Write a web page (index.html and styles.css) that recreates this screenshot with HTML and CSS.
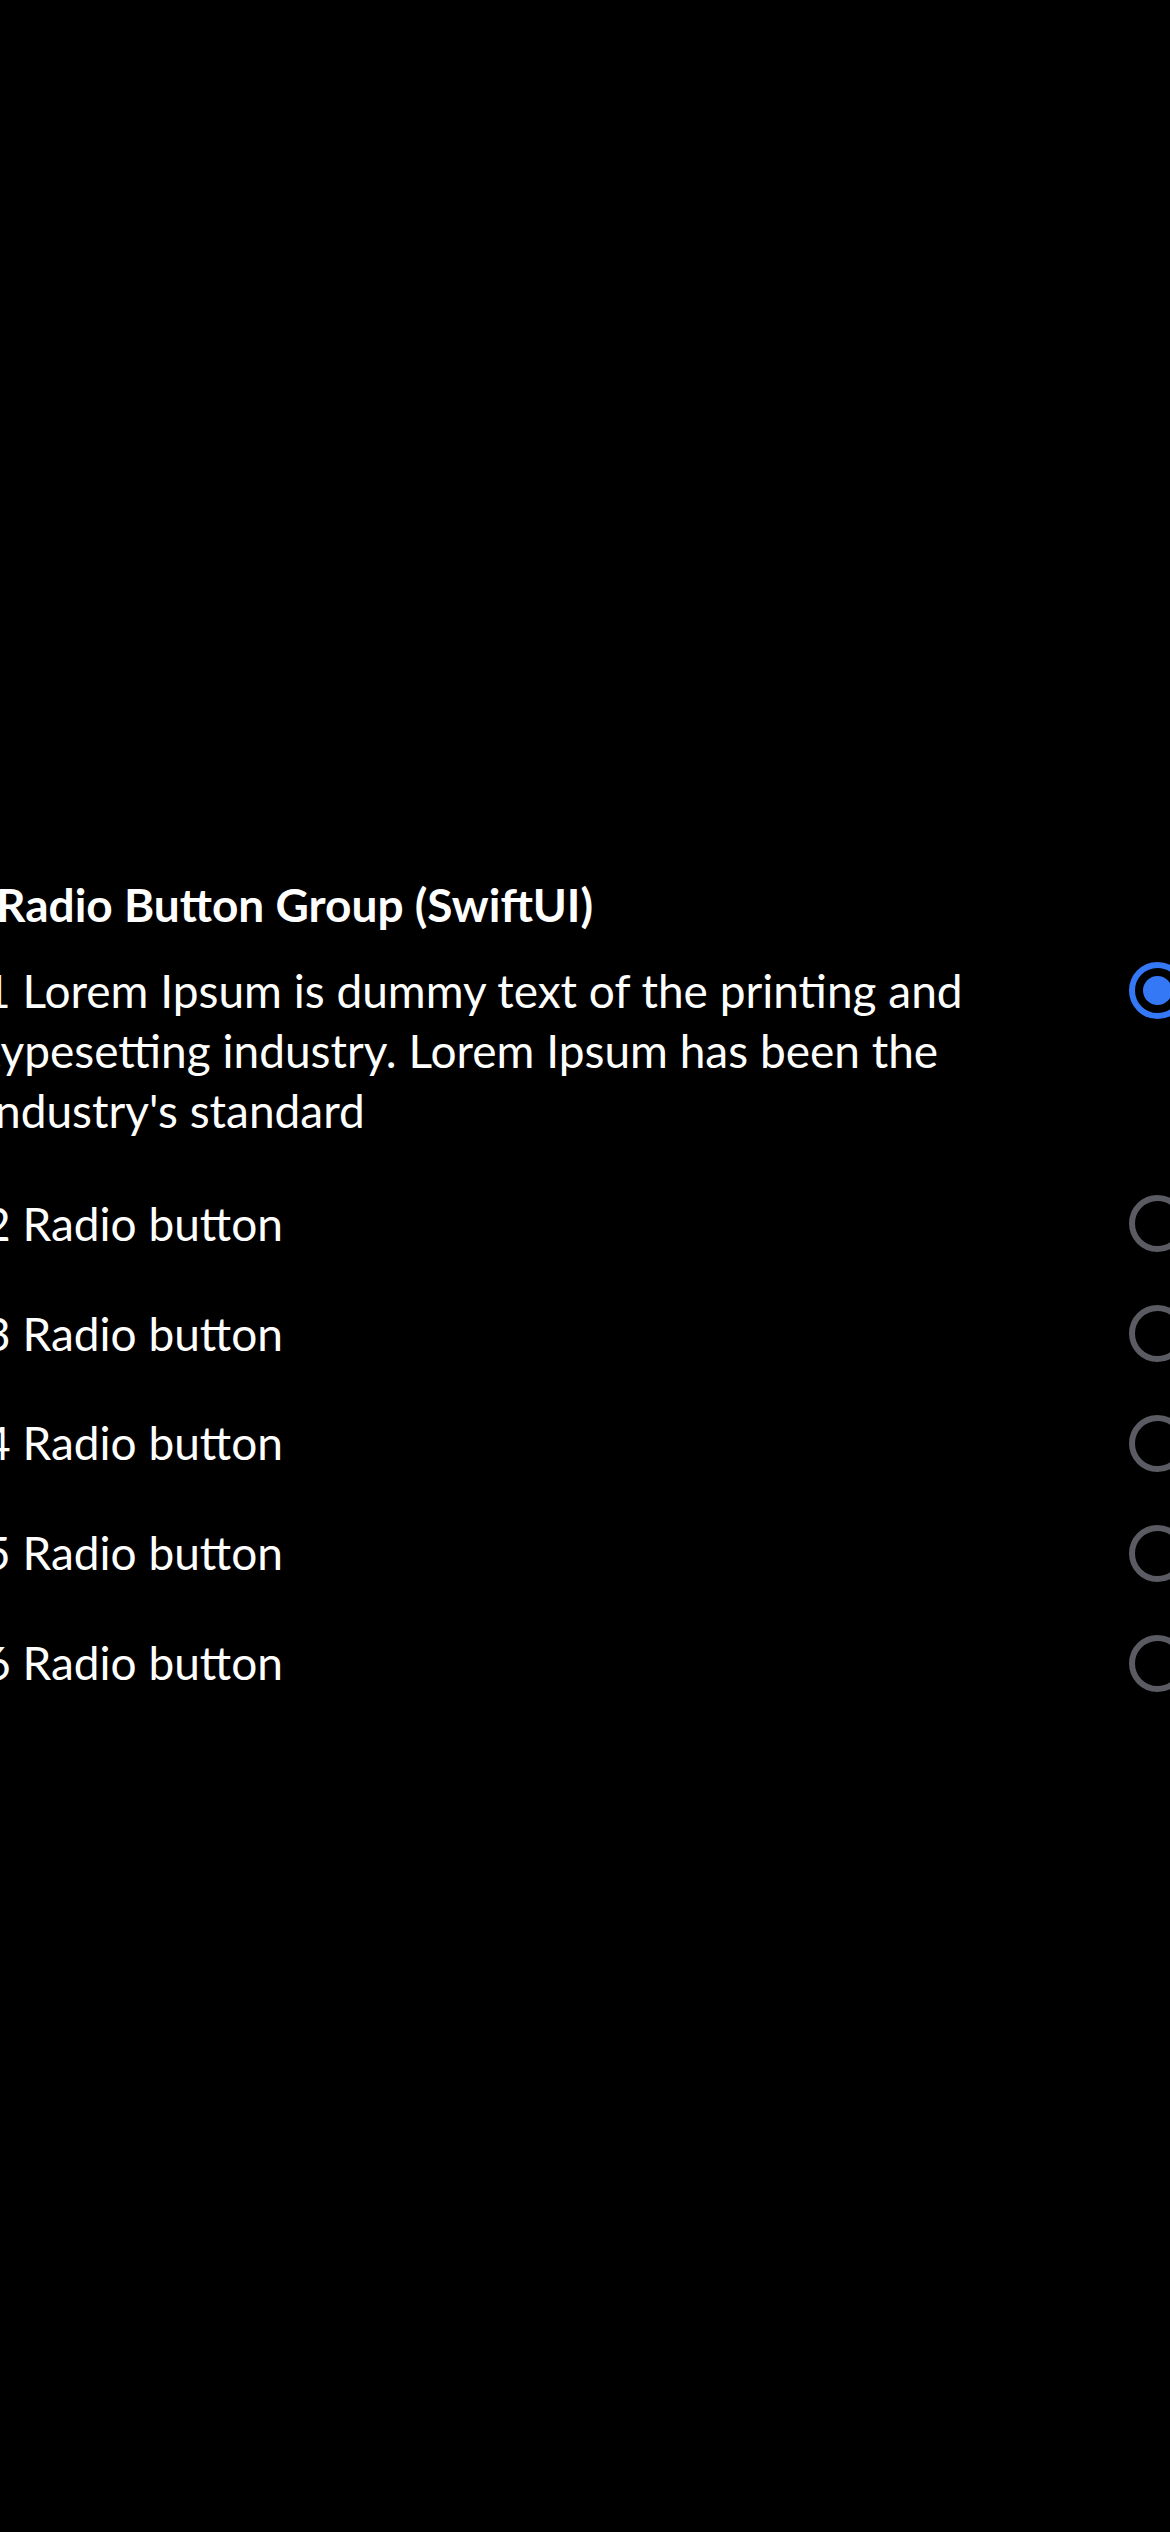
FILE: index.html
```html
<!DOCTYPE html>
<html lang="en">
<head>
<meta charset="utf-8">
<title>Radio Button Group (SwiftUI)</title>
<link rel="stylesheet" href="styles.css">
</head>
<body>
<main class="screen">
  <section class="group">
    <h1 class="title">Radio Button Group (SwiftUI)</h1>
    <ul class="options">
      <li class="option option-first">
        <span class="label">1 Lorem Ipsum is dummy text of the printing and typesetting industry. Lorem Ipsum has been the industry's standard</span>
        <span class="radio radio-on"></span>
      </li>
      <li class="option">
        <span class="label">2 Radio button</span>
        <span class="radio"></span>
      </li>
      <li class="option">
        <span class="label">3 Radio button</span>
        <span class="radio"></span>
      </li>
      <li class="option">
        <span class="label">4 Radio button</span>
        <span class="radio"></span>
      </li>
      <li class="option">
        <span class="label">5 Radio button</span>
        <span class="radio"></span>
      </li>
      <li class="option">
        <span class="label">6 Radio button</span>
        <span class="radio"></span>
      </li>
    </ul>
  </section>
</main>
</body>
</html>
```

FILE: styles.css
```css
html, body {
  margin: 0;
  padding: 0;
  background: #000;
}

body {
  width: 1170px;
  height: 2532px;
  overflow: hidden;
  font-family: "Lato", "Noto Sans", sans-serif;
  color: #fff;
}

.screen {
  height: 2532px;
  display: flex;
  justify-content: center;
  align-items: flex-start;
}

.group {
  flex: 0 0 1202px;
  width: 1202px;
  padding-top: 874.5px;
  display: flex;
  flex-direction: column;
}

.title {
  margin: 0 0 26px 0;
  padding-left: 12px;
  font-size: 46px;
  line-height: 60px;
  font-weight: 700;
}

.options {
  list-style: none;
  margin: 0;
  padding: 0;
  display: flex;
  flex-direction: column;
  gap: 49.5px;
}

.option {
  display: flex;
  align-items: flex-start;
  gap: 40px;
}

.option-first {
  margin-bottom: 3px;
}

.label {
  flex: 1 1 auto;
  font-size: 46px;
  line-height: 60.3px;
  font-weight: 400;
}

.radio {
  flex: 0 0 auto;
  box-sizing: border-box;
  width: 57px;
  height: 57px;
  margin-top: 1.5px;
  border: 6.5px solid #5b5b63;
  border-radius: 50%;
  display: flex;
  align-items: center;
  justify-content: center;
}

.radio-on {
  border-color: #3478f6;
}

.radio-on::after {
  content: "";
  width: 29px;
  height: 29px;
  border-radius: 50%;
  background: #3478f6;
}
```
